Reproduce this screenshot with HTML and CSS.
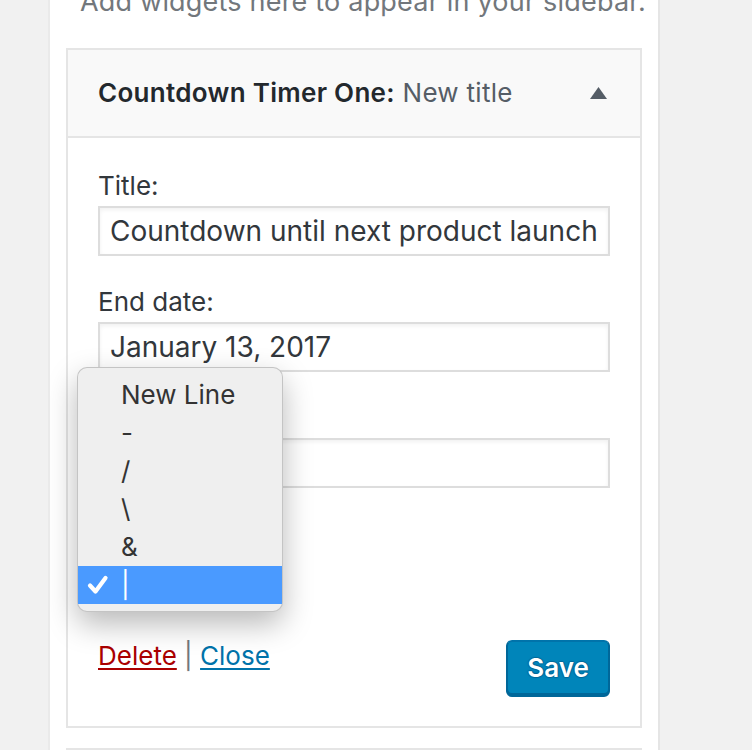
FILE: index.html
```html
<!DOCTYPE html>
<html lang="en">
<head>
<meta charset="utf-8">
<title>Widgets</title>
<link rel="stylesheet" href="styles.css">
</head>
<body>
<div class="panel">
  <p class="intro">Add widgets here to appear in your sidebar.</p>

  <div class="widget">
    <div class="widget-top">
      <h3 class="widget-title">Countdown Timer One:<span class="in-title"> New title</span></h3>
      <svg class="toggle" width="17" height="12" viewBox="0 0 17 12" aria-hidden="true"><polygon points="8.5,0 17,12 0,12" fill="#555d66"/></svg>
    </div>
    <div class="widget-inside">
      <div class="field">
        <label class="field-label">Title:</label>
        <div class="input">Countdown until next product launch</div>
      </div>
      <div class="field">
        <label class="field-label">End date:</label>
        <div class="input">January 13, 2017</div>
      </div>
      <div class="field">
        <label class="field-label">Separator:</label>
        <div class="input select">|</div>
      </div>
      <div class="actions">
        <div class="links"><a class="delete" href="#">Delete</a><span class="sep"> | </span><a class="close" href="#">Close</a></div>
        <button class="save" type="button">Save</button>
      </div>
    </div>

    <ul class="menu">
      <li class="menu-item">New Line</li>
      <li class="menu-item">-</li>
      <li class="menu-item">/</li>
      <li class="menu-item">\</li>
      <li class="menu-item">&amp;</li>
      <li class="menu-item is-selected"><svg class="check" width="22" height="20" viewBox="0 0 22 20" aria-hidden="true"><path d="M3 10.5 L8.5 16.5 L18.5 3" fill="none" stroke="#fff" stroke-width="4.2" stroke-linecap="round" stroke-linejoin="round"/></svg>|</li>
    </ul>
  </div>

  <div class="widget next"></div>
</div>
</body>
</html>
```

FILE: styles.css
```css
html, body {
  margin: 0;
  padding: 0;
}

body {
  background: #f1f1f1;
  font-family: Inter, "Noto Sans", sans-serif;
  overflow: hidden;
}

.panel {
  display: flow-root;
  margin-left: 48px;
  width: 612px;
  height: 100vh;
  overflow: hidden;
  box-sizing: border-box;
  background: #fff;
  border-left: 2px solid #eaeaea;
  border-right: 2px solid #e5e5e5;
  padding: 0 16px;
}

.intro {
  margin: -16px 0 0;
  padding-left: 14px;
  font-size: 27px;
  letter-spacing: 0.2px;
  line-height: 36px;
  color: #72777c;
  white-space: nowrap;
}

.widget {
  position: relative;
  margin-top: 28px;
  border: 2px solid #e5e5e5;
  background: #fff;
}

.widget-top {
  display: flex;
  align-items: center;
  justify-content: space-between;
  height: 86px;
  padding: 0 33px 0 30px;
  background: #f9f9f9;
  border-bottom: 2px solid #e5e5e5;
}

.widget-title {
  margin: 0;
  font-size: 26px;
  font-weight: 600;
  letter-spacing: 0.3px;
  line-height: 36px;
  color: #23282d;
}

.in-title {
  font-weight: 400;
  color: #555d66;
}

.toggle {
  display: block;
}

.widget-inside {
  padding: 30px 30px 31px;
}

.field {
  margin-bottom: 28px;
}

.field-label {
  display: block;
  margin-bottom: 2px;
  font-size: 26px;
  line-height: 36px;
  color: #32373c;
}

.input {
  height: 50px;
  box-sizing: border-box;
  border: 2px solid #ddd;
  box-shadow: inset 0 2px 4px rgba(0, 0, 0, 0.06);
  padding: 0 10px;
  font-size: 28px;
  line-height: 46px;
  color: #32373c;
  white-space: nowrap;
  overflow: hidden;
}

.actions {
  display: flex;
  justify-content: space-between;
  align-items: flex-start;
  margin-top: 150px;
}

.links {
  font-size: 26px;
  line-height: 36px;
  color: #555d66;
}

.sep {
  color: #72777c;
}

.links a {
  text-decoration: underline;
  text-decoration-thickness: 2px;
  text-underline-offset: 3px;
}

.delete {
  color: #a00;
}

.close {
  color: #0073aa;
}

.save {
  margin-top: 2px;
  width: 104px;
  height: 55px;
  box-sizing: border-box;
  background: #0085ba;
  border: 2px solid;
  border-color: #0073aa #006799 #006799;
  border-radius: 6px;
  box-shadow: 0 2px 0 #006799;
  color: #fff;
  font-family: Inter, "Noto Sans", sans-serif;
  font-size: 26px;
  font-weight: 600;
  text-shadow: 0 -1px 1px #006799, 1px 0 1px #006799, 0 1px 1px #006799, -1px 0 1px #006799;
  padding: 0;
  cursor: pointer;
}

.next {
  margin-top: 20px;
  height: 60px;
  background: #f9f9f9;
}

.menu {
  position: absolute;
  left: 9px;
  top: 317px;
  width: 206px;
  box-sizing: border-box;
  margin: 0;
  padding: 8px 0 7px;
  list-style: none;
  background: #efefef;
  border: 1px solid rgba(0, 0, 0, 0.18);
  border-radius: 10px;
  box-shadow: 0 12px 30px rgba(0, 0, 0, 0.28);
}

.menu-item {
  position: relative;
  height: 38px;
  padding-left: 43px;
  font-size: 26px;
  line-height: 38px;
  color: #333;
}

.menu-item.is-selected {
  background: #4a9aff;
  color: #fff;
}

.check {
  position: absolute;
  left: 9px;
  top: 9px;
}
```
